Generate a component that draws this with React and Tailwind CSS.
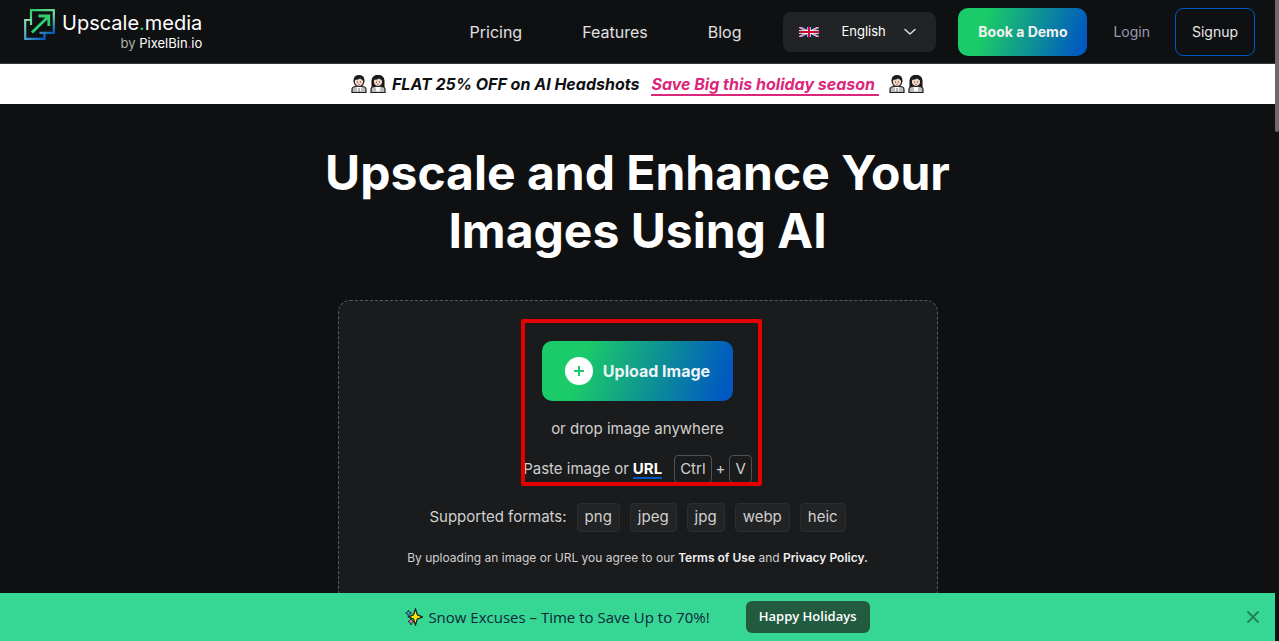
const navLinks = ["Pricing", "Features", "Blog"];
const formats = ["png", "jpeg", "jpg", "webp", "heic"];

function Logo() {
    return (
        <a href="#" className="flex items-start gap-[6px] font-normal text-white">
            <svg width="32" height="32" viewBox="0 0 32 32" fill="none">
                <defs>
                    <linearGradient id="logoTop" x1="10" y1="0" x2="26" y2="30" gradientUnits="userSpaceOnUse">
                        <stop stopColor="#2fca6c" />
                        <stop offset="0.400" stopColor="#7be0a0" />
                        <stop offset="0.900" stopColor="#0058c2" />
                    </linearGradient>
                    <linearGradient id="logoBottom" x1="2" y1="9" x2="20" y2="31" gradientUnits="userSpaceOnUse">
                        <stop stopColor="#8ae8a8" />
                        <stop offset="0.600" stopColor="#4494c8" />
                        <stop offset="1" stopColor="#0058c2" />
                    </linearGradient>
                </defs>
                <path d="M7 16V1.200H29.800V23.800H15.500" stroke="url(#logoTop)" strokeWidth="2.200" />
                <path d="M7 11H1.200V29.800H20.500V24" stroke="url(#logoBottom)" strokeWidth="2.200" />
                <path d="M8 23.500L24.500 7.500M14.500 7H24.800V17" stroke="#2fd06f" strokeWidth="2.800" />
            </svg>
            <span className="flex flex-col items-end">
                <span className="text-[20px] leading-[29px]">Upscale<span className="text-[#19cc69]">.</span>media</span>
                <span className="text-[13px] leading-[10px]"><span className="text-[#b0b0b0]">by</span> PixelBin<span className="text-[#c030c0]">.</span>io</span>
            </span>
        </a>
    );
}

function Flag() {
    return (
        <svg width="20" height="10" viewBox="0 0 60 30" className="shrink-0">
            <path d="M0 0h60v30H0z" fill="#012169" />
            <path d="M0 0l60 30M60 0L0 30" stroke="#fff" strokeWidth="6" />
            <path d="M0 0l60 30M60 0L0 30" stroke="#c8102e" strokeWidth="2" />
            <path d="M30 0v30M0 15h60" stroke="#fff" strokeWidth="10" />
            <path d="M30 0v30M0 15h60" stroke="#c8102e" strokeWidth="6" />
        </svg>
    );
}

function Person({ longHair }) {
    return (
        <svg width="16" height="20" viewBox="0 0 16 20">
            {longHair && <path d="M1.500 14.500V6.500Q2 1 8 1T14.500 6.500V14.500Z" fill="#16161a" />}
            <path d="M1 18.500V15.500Q1 12.500 5 12.500H11Q15 12.500 15 15.500V18.500Z" fill="#bcbcbe" stroke="#1c1c1e" strokeWidth="1.200" />
            <path d="M5.500 12.500H10.500L9.500 17.500H6.500Z" fill="#fff" />
            {!longHair && <path d="M8 14V18" stroke="#666" strokeWidth="1" />}
            <path d="M3.200 6.500Q3.200 12.500 8 12.500T12.800 6.500Q12 2 8 2T3.200 6.500Z" fill="#f3d8c8" stroke="#1c1c1e" strokeWidth="1.200" />
            <path d="M2.700 8Q1.800 1 8 1T13.300 8Q11.500 5.500 9 4.500Q7 6 4.500 5.800Z" fill="#1c1c1e" />
            <path d="M6 8h1M9 8h1" stroke="#333" strokeWidth="1" />
            <path d="M7 10.300h2" stroke="#b9796c" strokeWidth="1" />
        </svg>
    );
}

function People() {
    return (
        <span className="flex gap-[3px]">
            <Person />
            <Person longHair />
        </span>
    );
}

function Header() {
    return (
        <header className="flex h-16 shrink-0 items-center border-b border-[#343536] pr-5">
            <div className="flex-1 self-start pt-[9px] pl-6">
                <Logo />
            </div>
            <nav className="flex gap-[60px] text-[16px] text-[#e0e0e0]">
                {navLinks.map((link) => (
                    <a key={link} href="#">{link}</a>
                ))}
            </nav>
            <div className="relative ml-[42px] flex h-10 w-[153px] items-center rounded-lg bg-[#222324]">
                <span className="pointer-events-none absolute left-4"><Flag /></span>
                <select aria-label="Language" className="h-full w-full appearance-none rounded-lg bg-transparent pl-[58px] text-[13px] text-white">
                    <option>English</option>
                </select>
                <svg width="12" height="8" viewBox="0 0 12 8" fill="none" className="pointer-events-none absolute right-5">
                    <path d="M1 1.500L6 6L11 1.500" stroke="#d8d8e0" strokeWidth="1.600" strokeLinecap="round" strokeLinejoin="round" />
                </svg>
            </div>
            <button className="ml-[22px] h-12 w-[129px] rounded-[10px] bg-[linear-gradient(107deg,#1bca68_22%,#0058c2_95%)] text-[14px] font-bold text-[#f0f0f0]">Book a Demo</button>
            <a href="#" className="ml-[26px] text-[14px] text-[#9b9bb4]">Login</a>
            <button className="ml-[25px] h-12 w-20 rounded-[8px] border border-[#0058c2] text-[14px] text-[#e8e8e8]">Signup</button>
        </header>
    );
}

function Promo() {
    return (
        <div className="flex h-10 shrink-0 items-center justify-center bg-white text-[16px] font-bold text-[#0f1012] italic">
            <People />
            <span className="ml-[6px]">FLAT 25% OFF on AI Headshots</span>
            <a href="#" className="mr-[10px] ml-3 border-b-2 border-[#db277b] pt-[2px] pr-1 leading-5 text-[#db277b]">Save Big this holiday season</a>
            <People />
        </div>
    );
}

function UploadCard() {
    return (
        <section className="relative mx-auto mt-10 flex h-[340px] w-full max-w-[600px] flex-col items-center rounded-xl border border-dashed border-[#58595a] bg-[#1a1b1c] pt-10 text-[15px] text-[#d0d0d0]">
            <button className="flex h-[60px] w-[191px] shrink-0 items-center justify-center gap-[10px] rounded-[10px] bg-[linear-gradient(107deg,#1bca68_22%,#0058c2_95%)] text-[16px] font-bold text-[#eaf4f4]">
                <svg width="28" height="28" viewBox="0 0 28 28">
                    <circle cx="14" cy="14" r="14" fill="#fff" />
                    <path d="M9 14h10M14 9v10" stroke="#1bca68" strokeWidth="2" />
                </svg>
                Upload Image
            </button>
            <p className="mt-4 leading-6">or drop image anywhere</p>
            <div className="mt-[14px] flex h-7 items-center">
                <span>Paste image or</span>
                <a href="#" className="ml-1 border-b-2 border-[#0058c2] pt-[2px] leading-4 font-bold text-white">URL</a>
                <kbd className="ml-3 flex h-7 items-center rounded-[4px] border border-[#505152] px-[5px] font-[Inter]">Ctrl</kbd>
                <span className="mx-1">+</span>
                <kbd className="flex h-7 items-center rounded-[4px] border border-[#505152] px-[5px] font-[Inter]">V</kbd>
            </div>
            <div className="mt-5 flex items-center gap-[10px]">
                <span>Supported formats:</span>
                {formats.map((format) => (
                    <span key={format} className="flex h-[29px] items-center rounded-[4px] border border-[#2c2d2e] bg-[#222324] px-[7px]">{format}</span>
                ))}
            </div>
            <p className="mt-4 text-[12px] leading-5">
                By uploading an image or URL you agree to our <a href="#" className="font-semibold text-[#f0f0f0]">Terms of Use</a> and <a href="#" className="font-semibold text-[#f0f0f0]">Privacy Policy.</a>
            </p>
            {/* highlight around the upload controls */}
            <div className="pointer-events-none absolute top-[18px] left-[182px] h-[167px] w-[241px] rounded-[2px] border-4 border-[#e60000]"></div>
        </section>
    );
}

function HolidayBar() {
    return (
        <footer className="relative flex h-12 shrink-0 items-center justify-center bg-[#36d695] font-['Open_Sans',sans-serif] text-[15px] text-[#10263a]">
            <svg width="18" height="18" viewBox="0 0 18 18" className="mr-[5px]">
                <path d="M10.500 1L12.300 6.700L17.500 9L12.300 11L10.500 17L8.500 11L3.500 9L8.500 6.700Z" fill="#ffe70a" stroke="#1c1c1e" strokeWidth="1.200" />
                <path d="M3.500 2L4.400 4.200L6.500 5L4.400 6L3.500 8.500L2.500 6L0.700 5L2.500 4.200Z" fill="#3aa5f0" stroke="#1c1c1e" strokeWidth="0.800" />
                <path d="M6 10.500L7 12.700L9 13.500L7 14.500L6 17L5 14.500L3 13.500L5 12.700Z" fill="#f080b0" stroke="#1c1c1e" strokeWidth="0.800" />
            </svg>
            <span>Snow Excuses – Time to Save Up to 70%!</span>
            <button className="ml-9 h-8 w-[124px] rounded-md bg-[#235b40] text-[13px] font-semibold text-white">Happy Holidays</button>
            <button aria-label="Close" className="absolute right-4">
                <svg width="12" height="12" viewBox="0 0 12 12">
                    <path d="M0.500 0.500L11.500 11.500M11.500 0.500L0.500 11.500" stroke="#247858" strokeWidth="1.800" />
                </svg>
            </button>
        </footer>
    );
}

export default function App() {
    return (
        <div className="flex h-screen overflow-hidden bg-[#0f1012] font-[Inter,sans-serif]">
            <div className="flex min-w-0 flex-1 flex-col">
                <Header />
                <Promo />
                <main className="min-h-0 flex-1 overflow-hidden pt-10">
                    <h1 className="mx-auto max-w-[720px] text-center text-[48px] leading-[58px] font-bold text-white">Upscale and Enhance Your<br />Images Using AI</h1>
                    <UploadCard />
                </main>
                <HolidayBar />
            </div>
            <div className="w-1 shrink-0 bg-[#0f1012]">
                <div className="h-[132px] rounded-b-sm bg-[#6b6b6b]"></div>
            </div>
        </div>
    );
}
